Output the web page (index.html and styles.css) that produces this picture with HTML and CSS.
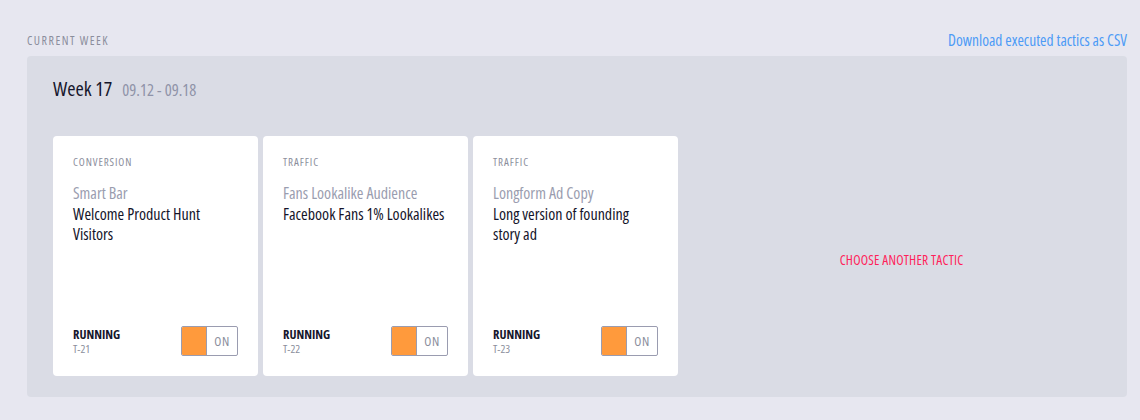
FILE: index.html
```html
<!DOCTYPE html>
<html>
<head>
<meta charset="utf-8">
<link rel="stylesheet" href="styles.css">
</head>
<body>
<div class="page">
  <div class="topbar">
    <div class="section-label">CURRENT WEEK</div>
    <a class="csv-link" href="#">Download executed tactics as CSV</a>
  </div>
  <div class="panel">
    <div class="week-head">
      <span class="week-title">Week 17</span>
      <span class="week-dates">09.12 - 09.18</span>
    </div>
    <div class="cards">
      <div class="card">
        <div class="card-cat">CONVERSION</div>
        <div class="card-name">Smart Bar</div>
        <div class="card-desc">Welcome Product Hunt Visitors</div>
        <div class="card-foot">
          <div class="status">
            <div class="status-label">RUNNING</div>
            <div class="status-id">T-21</div>
          </div>
          <div class="toggle"><span class="toggle-knob"></span><span class="toggle-text">ON</span></div>
        </div>
      </div>
      <div class="card">
        <div class="card-cat">TRAFFIC</div>
        <div class="card-name">Fans Lookalike Audience</div>
        <div class="card-desc">Facebook Fans 1% Lookalikes</div>
        <div class="card-foot">
          <div class="status">
            <div class="status-label">RUNNING</div>
            <div class="status-id">T-22</div>
          </div>
          <div class="toggle"><span class="toggle-knob"></span><span class="toggle-text">ON</span></div>
        </div>
      </div>
      <div class="card">
        <div class="card-cat">TRAFFIC</div>
        <div class="card-name">Longform Ad Copy</div>
        <div class="card-desc">Long version of founding story ad</div>
        <div class="card-foot">
          <div class="status">
            <div class="status-label">RUNNING</div>
            <div class="status-id">T-23</div>
          </div>
          <div class="toggle"><span class="toggle-knob"></span><span class="toggle-text">ON</span></div>
        </div>
      </div>
      <div class="choose">
        <a class="choose-link" href="#">CHOOSE ANOTHER TACTIC</a>
      </div>
    </div>
  </div>
</div>
</body>
</html>
```
FILE: styles.css
```css
* { box-sizing: border-box; }
html, body {
  margin: 0;
  padding: 0;
  background: #e7e7f0;
  font-family: "Open Sans", "DejaVu Sans Condensed", sans-serif;
  font-stretch: 75%;
  color: #14142a;
}
.page {
  padding: 30px 13px 0 27px;
}
.topbar {
  display: flex;
  justify-content: space-between;
  align-items: center;
  height: 20px;
  margin-bottom: 6px;
}
.section-label {
  font-size: 12px;
  letter-spacing: 1.5px;
  color: #8b8e9c;
}
.csv-link {
  font-size: 15.5px;
  color: #4d9bf6;
  text-decoration: none;
}
.panel {
  background: #dadce5;
  border-radius: 4px;
  padding: 19px 7px 21px 26px;
  height: 341px;
}
.week-head {
  display: flex;
  align-items: baseline;
  gap: 10px;
  height: 26px;
  margin-bottom: 35px;
}
.week-title {
  font-size: 20px;
  color: #16162c;
}
.week-dates {
  font-size: 16.5px;
  color: #8f93a8;
}
.cards {
  display: flex;
  gap: 5px;
  height: 240px;
}
.card {
  width: 205px;
  background: #fff;
  border-radius: 4px;
  padding: 18px 20px 20px 20px;
  display: flex;
  flex-direction: column;
}
.card-cat {
  font-size: 11px;
  letter-spacing: 0.9px;
  color: #8b8e9c;
  margin-bottom: 14.5px;
}
.card-name {
  font-size: 16px;
  line-height: 19.5px;
  color: #9a9daf;
  margin-bottom: 2px;
}
.card-desc {
  font-size: 16px;
  line-height: 19.5px;
  color: #14142a;
}
.card-foot {
  margin-top: auto;
  display: flex;
  justify-content: space-between;
  align-items: center;
}
.status {
  display: flex;
  flex-direction: column;
}
.status-label {
  font-size: 12.5px;
  font-weight: 700;
  color: #16162c;
  line-height: 14px;
}
.status-id {
  font-size: 11.5px;
  color: #8b8e9c;
  line-height: 13px;
}
.toggle {
  display: flex;
  width: 57px;
  height: 30px;
  border: 1px solid #9a9cb0;
  border-radius: 2px;
  overflow: hidden;
  background: #fff;
}
.toggle-knob {
  width: 25px;
  background: #ff9a3c;
  border-right: 1px solid #9a9cb0;
}
.toggle-text {
  flex: 1;
  display: flex;
  align-items: center;
  justify-content: center;
  font-size: 13px;
  letter-spacing: 0.6px;
  color: #8b8e9c;
}
.choose {
  flex: 1;
  display: flex;
  align-items: center;
  justify-content: center;
  padding-top: 8px;
}
.choose-link {
  font-size: 13.5px;
  letter-spacing: 0.2px;
  color: #ff1f5b;
  text-decoration: none;
}
```
